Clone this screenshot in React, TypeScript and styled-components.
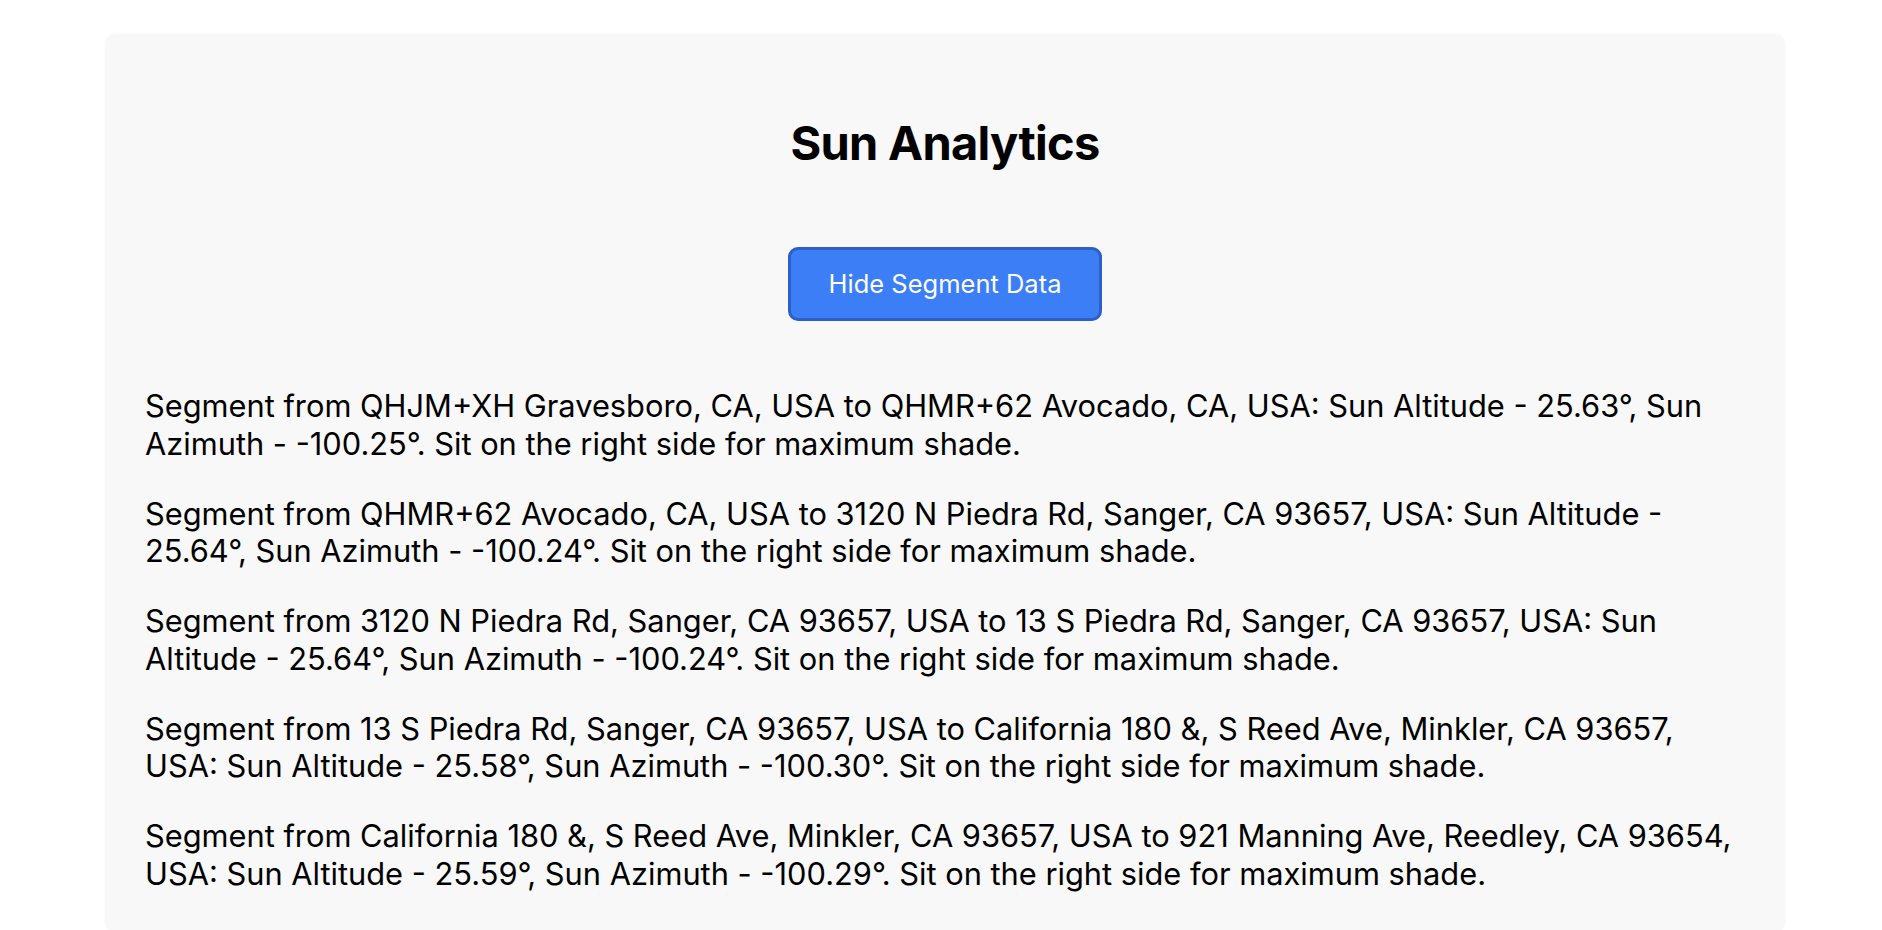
import React from "react";
import styled, { createGlobalStyle } from "styled-components";

const GlobalStyle = createGlobalStyle`
  html, body {
    margin: 0;
    padding: 0;
    background: #ffffff;
  }
  body {
    font-family: Inter, "Noto Sans", "Liberation Sans", sans-serif;
    color: #000000;
  }
`;

const Page = styled.main`
  padding: 34px 97px 40px 105px;
`;

const Card = styled.section`
  background: #f8f8f8;
  border-radius: 10px;
  padding: 40px;
  display: flex;
  flex-direction: column;
  box-shadow: 0 0 3px rgba(0, 0, 0, 0.04);
`;

const Title = styled.h1`
  margin: 40px 0 0;
  text-align: center;
  font-size: 47px;
  line-height: 57px;
  font-weight: 700;
  letter-spacing: -0.015em;
`;

const ToggleButton = styled.button`
  align-self: center;
  margin-top: 76px;
  padding: 18px 38px;
  background: #3b7ef5;
  color: #ffffff;
  border: 3px solid #2c5fc8;
  border-radius: 10px;
  font-family: inherit;
  font-size: 25.5px;
  line-height: 32px;
  cursor: pointer;
`;

const SegmentList = styled.div`
  margin-top: 66px;
  padding-right: 4px;
  display: flex;
  flex-direction: column;
  gap: 32.5px;
`;

const Segment = styled.p`
  margin: 0;
  font-size: 30.8px;
  line-height: 37.5px;
`;

const segments = [
  "Segment from QHJM+XH Gravesboro, CA, USA to QHMR+62 Avocado, CA, USA: Sun Altitude - 25.63°, Sun Azimuth - -100.25°. Sit on the right side for maximum shade.",
  "Segment from QHMR+62 Avocado, CA, USA to 3120 N Piedra Rd, Sanger, CA 93657, USA: Sun Altitude - 25.64°, Sun Azimuth - -100.24°. Sit on the right side for maximum shade.",
  "Segment from 3120 N Piedra Rd, Sanger, CA 93657, USA to 13 S Piedra Rd, Sanger, CA 93657, USA: Sun Altitude - 25.64°, Sun Azimuth - -100.24°. Sit on the right side for maximum shade.",
  "Segment from 13 S Piedra Rd, Sanger, CA 93657, USA to California 180 &, S Reed Ave, Minkler, CA 93657, USA: Sun Altitude - 25.58°, Sun Azimuth - -100.30°. Sit on the right side for maximum shade.",
  "Segment from California 180 &, S Reed Ave, Minkler, CA 93657, USA to 921 Manning Ave, Reedley, CA 93654, USA: Sun Altitude - 25.59°, Sun Azimuth - -100.29°. Sit on the right side for maximum shade.",
];

export default function App() {
  return (
    <>
      <GlobalStyle />
      <Page>
        <Card>
          <Title>Sun Analytics</Title>
          <ToggleButton type="button">Hide Segment Data</ToggleButton>
          <SegmentList>
            {segments.map((s) => (
              <Segment key={s}>{s}</Segment>
            ))}
          </SegmentList>
        </Card>
      </Page>
    </>
  );
}
